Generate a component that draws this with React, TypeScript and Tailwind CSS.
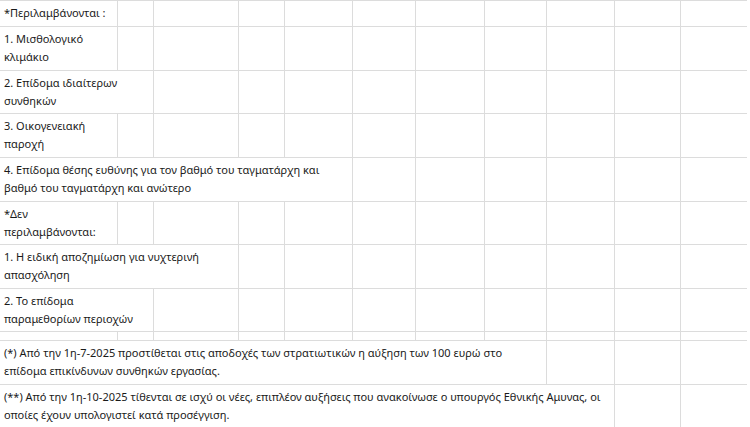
import React from "react";

const widths = [118, 36, 85, 46, 68, 62, 69, 62, 68, 66, 66];

type Row = {
  h: string;
  text?: React.ReactNode;
  span?: number;
};

const rows: Row[] = [
  { h: "h-[26px]", text: "*Περιλαμβάνονται :", span: 1 },
  { h: "h-[44px]", text: <>1. Μισθολογικό<br />κλιμάκιο</>, span: 1 },
  { h: "h-[43px]", text: <>2. Επίδομα ιδιαίτερων<br />συνθηκών</>, span: 2 },
  { h: "h-[44px]", text: <>3. Οικογενειακή<br />παροχή</>, span: 1 },
  {
    h: "h-[44px]",
    text: (
      <>
        4. Επίδομα θέσης ευθύνης για τον βαθμό του ταγματάρχη και
        <br />
        βαθμό του ταγματάρχη και ανώτερο
      </>
    ),
    span: 5,
  },
  { h: "h-[43px]", text: <>*Δεν<br />περιλαμβάνονται:</>, span: 1 },
  { h: "h-[44px]", text: <>1. Η ειδική αποζημίωση για νυχτερινή<br />απασχόληση</>, span: 3 },
  { h: "h-[43px]", text: <>2. Το επίδομα<br />παραμεθορίων περιοχών</>, span: 2 },
  { h: "h-[9px]", span: 0 },
  {
    h: "h-[44px]",
    text: (
      <>
        (*) Από την 1η-7-2025 προστίθεται στις αποδοχές των στρατιωτικών η αύξηση των 100 ευρώ στο
        <br />
        επίδομα επικίνδυνων συνθηκών εργασίας.
      </>
    ),
    span: 8,
  },
  {
    h: "h-[44px]",
    text: (
      <>
        (**) Από την 1η-10-2025 τίθενται σε ισχύ οι νέες, επιπλέον αυξήσεις που ανακοίνωσε ο υπουργός Εθνικής Αμυνας, οι
        <br />
        οποίες έχουν υπολογιστεί κατά προσέγγιση.
      </>
    ),
    span: 9,
  },
];

const cell = "border-r border-b border-[#dcdcdc] p-0";

export default function App() {
  return (
    <div className="w-[750px] h-[427px] overflow-hidden bg-white font-['Noto_Sans',sans-serif] text-[11px] leading-[18px] text-[#1a1a1a]">
      <table className="table-fixed border-separate border-spacing-0 w-[747px] border-t border-[#dcdcdc]">
        <colgroup>
          {widths.map((w, i) => (
            <col key={i} style={{ width: w }} />
          ))}
        </colgroup>
        <tbody>
          {rows.map((r, i) => {
            const span = r.span ?? 0;
            const rest = 11 - span;
            return (
              <tr key={i} className={r.h}>
                {span > 0 && (
                  <td colSpan={span} className={`${cell} px-1 pt-[3px] pb-[2px] align-top whitespace-nowrap`}>
                    {r.text}
                  </td>
                )}
                {Array.from({ length: rest }).map((_, j) => (
                  <td key={j} className={`${cell} ${j === rest - 1 ? "border-r-0" : ""}`} />
                ))}
              </tr>
            );
          })}
        </tbody>
      </table>
    </div>
  );
}
